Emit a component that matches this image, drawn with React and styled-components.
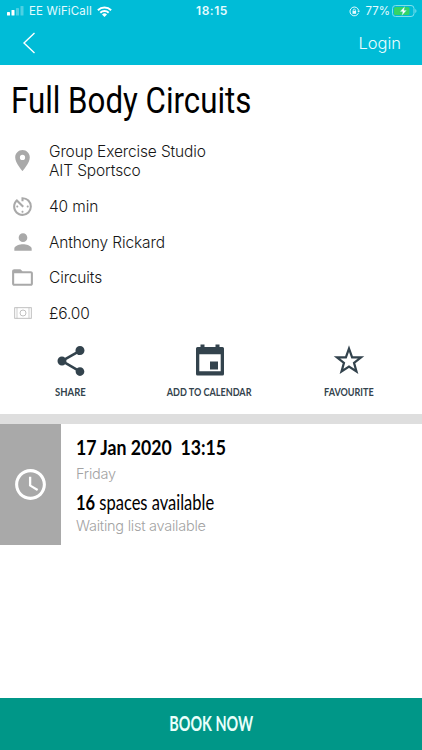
import React from 'react';
import styled, { createGlobalStyle } from 'styled-components';
import { MdPlace, MdAvTimer, MdPerson, MdFolderOpen, MdAccessTime } from 'react-icons/md';
import { IoMdShare } from 'react-icons/io';

const GlobalStyle = createGlobalStyle`
    *{
        box-sizing:border-box;
    }
    body{
        margin:0;
        background:white;
        font-family:"Liberation Sans", Arial, sans-serif;
    }
`

const Screen = styled.div`
    display:flex;
    flex-direction:column;
    height:750px;
    width:422px;
    overflow:hidden;
    background:white;
`

const Header = styled.header`
    height:65px;
    flex:none;
    background:#00bcd7;
    color:white;
`

const StatusBar = styled.div`
    display:grid;
    grid-template-columns:1fr auto 1fr;
    align-items:center;
    height:22px;
    padding:0 5px 0 7px;
    font-family:Inter, sans-serif;
    font-size:11.5px;
    line-height:22px;
    color:#e4fbff;
`

const StatusGroup = styled.div`
    display:flex;
    align-items:center;
    justify-content:${({ end }) => end ? 'flex-end' : 'flex-start'};
    svg{
        display:block;
        flex:none;
    }
`

const Carrier = styled.span`
    margin:0 5px 0 5px;
    letter-spacing:0.15px;
`

const Clock = styled.span`
    font-weight:600;
    font-size:12px;
    letter-spacing:0.55px;
`

const Percent = styled.span`
    margin:0 2px 0 5px;
`

const NavBar = styled.nav`
    display:flex;
    align-items:center;
    justify-content:space-between;
    height:42px;
    padding:0 21px 0 22px;
`

const NavButton = styled.button`
    display:flex;
    padding:0;
    border-width:0;
    background:transparent;
    color:#e9fcff;
    font-family:Inter, sans-serif;
    font-weight:300;
    font-size:16.5px;
    line-height:20px;
`

const Squeezed = styled.span`
    display:inline-block;
    white-space:pre;
    transform:scaleX(${({ scale }) => scale || 1});
    transform-origin:${({ origin }) => origin || 'left'} center;
`

const Title = styled.h1`
    margin:14px 0 0 11px;
    height:44px;
    font-family:Roboto, sans-serif;
    font-weight:400;
    font-size:36px;
    line-height:44px;
    color:black;
`

const InfoList = styled.div`
    display:flex;
    flex-direction:column;
    padding-top:15px;
`

const InfoRow = styled.div`
    display:grid;
    grid-template-columns:45px 1fr;
    align-items:center;
    height:${({ tall }) => tall ? '46px' : '35.6px'};
    margin-bottom:${({ tall }) => tall ? '4.8px' : '0'};
`

const InfoIcon = styled.div`
    display:flex;
    justify-content:center;
    padding-bottom:1px;
    color:#a9a9a9;
`

const InfoText = styled.div`
    padding-left:4px;
    font-family:Inter, sans-serif;
    font-weight:300;
    font-size:15.5px;
    line-height:19px;
    letter-spacing:-0.13px;
    color:#161616;
`

const Actions = styled.div`
    display:grid;
    grid-template-columns:repeat(3, 139px);
    margin:10px 0 0 1px;
    height:73.2px;
    flex:none;
`

const Action = styled.button`
    display:flex;
    flex-direction:column;
    align-items:center;
    padding:2px 0 0;
    border-width:0;
    background:transparent;
    color:#33434d;
    font-family:Lato, sans-serif;
    font-weight:700;
    font-size:12px;
    line-height:16px;
    white-space:nowrap;
    svg{
        display:block;
        margin-bottom:5px;
    }
`

const Divider = styled.div`
    height:10px;
    flex:none;
    background:#dedede;
`

const Session = styled.section`
    display:flex;
    height:121px;
`

const SessionIcon = styled.div`
    display:flex;
    align-items:center;
    justify-content:center;
    width:61px;
    background:#a9a9a9;
    color:white;
`

const SessionBody = styled.div`
    padding:9px 0 0 15px;
`

const SessionLine = styled.div`
    height:${({ bold }) => bold ? '28px' : '25px'};
    font-family:Lato, sans-serif;
    font-size:21px;
    line-height:28px;
    font-weight:${({ bold }) => bold ? 700 : 400};
    color:black;
`

const SessionNote = styled.div`
    height:27px;
    font-family:Inter, sans-serif;
    font-weight:300;
    font-size:14.5px;
    line-height:25px;
    letter-spacing:-0.25px;
    color:#a3a3a3;
`

const BookButton = styled.button`
    height:52px;
    flex:none;
    margin-top:auto;
    padding:0 0 2px;
    border-width:0;
    background:#009788;
    color:#eafffb;
    font-family:Lato, sans-serif;
    font-weight:700;
    font-size:20px;
    line-height:48px;
`

const SignalIcon = () => (
    <svg width="17" height="10" viewBox="0 0 17 10" fill="#fff">
        <rect x="0" y="6" width="3" height="3.5" rx=".6" />
        <rect x="4.5" y="4" width="3" height="5.5" rx=".6" />
        <rect x="9" y="2" width="3" height="7.5" rx=".6" opacity=".3" />
        <rect x="13.5" y="0" width="3" height="9.5" rx=".6" opacity=".3" />
    </svg>
)

const WifiIcon = () => (
    <svg width="15" height="11" viewBox="0 0 15 11" fill="none" stroke="#fff" strokeWidth="2">
        <path d="M.9 4.2a9.4 9.4 0 0 1 13.2 0" />
        <path d="M3.3 6.8a6 6 0 0 1 8.4 0" />
        <path d="M7.5 11 5 8.5a3.6 3.6 0 0 1 5 0z" fill="#fff" stroke="none" />
    </svg>
)

const RotationLockIcon = () => (
    <svg width="11" height="11" viewBox="0 0 11 11" fill="none" stroke="#e4fbff">
        <path d="M9.4 7.2A4.4 4.4 0 1 1 9.7 4.6" />
        <path d="M8.1 4.7h3L9.8 6.6z" fill="#e4fbff" stroke="none" />
        <rect x="3.5" y="4.9" width="3.6" height="2.9" fill="#e4fbff" stroke="none" />
        <path d="M4.2 5V4.2a1.1 1.1 0 0 1 2.2 0V5" strokeWidth=".8" />
    </svg>
)

const BatteryIcon = () => (
    <svg width="25" height="12" viewBox="0 0 25 12">
        <rect x=".5" y=".5" width="21.5" height="11" rx="3" fill="none" stroke="#7fe0ee" />
        <rect x="2" y="2" width="15.5" height="8" rx="1.6" fill="#35d466" />
        <path d="M23.3 4v4c1.5-.5 1.5-3.5 0-4z" fill="#7fe0ee" />
        <path d="M13 1 7.8 6.8h2.8L9.6 11l5.2-5.8H12z" fill="#fff" stroke="#18c9a0" strokeWidth=".4" />
    </svg>
)

const BackIcon = () => (
    <svg width="14" height="22" viewBox="0 0 14 22" fill="none" stroke="#fff" strokeWidth="1.4">
        <path d="M12.5 1 2 11l10.5 10" />
    </svg>
)

const MoneyIcon = () => (
    <svg width="18" height="12" viewBox="0 0 18 12" fill="none" stroke="#b9b9b9" strokeWidth=".9">
        <rect x=".7" y=".7" width="16.6" height="10.6" />
        <path d="M3 .7v10.6M15 .7v10.6" strokeWidth=".7" />
        <circle cx="9" cy="6" r="3" />
    </svg>
)

const CalendarIcon = () => (
    <svg width="36" height="36" viewBox="0 0 36 36" fill="currentColor">
        <path d="M8.5 1.5h4v3.2h-4zM23.5 1.5h4v3.2h-4z" />
        <path fillRule="evenodd" d="M5.5 4h25A1.5 1.5 0 0 1 32 5.5V31a1.5 1.5 0 0 1-1.5 1.5h-25A1.5 1.5 0 0 1 4 31V5.5A1.5 1.5 0 0 1 5.5 4zM7.3 11.3v16.9h21.4V11.3z" />
        <path d="M18 18.5h8v8h-8z" />
    </svg>
)

const StarIcon = () => (
    <svg width="36" height="36" viewBox="1 1 34 34" fill="none" stroke="currentColor" strokeWidth="2.1">
        <path d="M18 6.2 20.94 14.5H29.4L22.76 19.75 25.05 27.9 18 23.2 10.95 27.9 13.24 19.75 6.6 14.5H15.06z" />
    </svg>
)

const details = [
    { icon: <MdPlace size={25} />, lines: ['Group Exercise Studio', 'AIT Sportsco'] },
    { icon: <MdAvTimer size={25} />, lines: ['40 min'] },
    { icon: <MdPerson size={26} />, lines: ['Anthony Rickard'] },
    { icon: <MdFolderOpen size={25} />, lines: ['Circuits'] },
    { icon: <MoneyIcon />, lines: ['£6.00'] },
]

const actions = [
    { icon: <IoMdShare size={36} />, label: 'SHARE', scale: 0.79 },
    { icon: <CalendarIcon />, label: 'ADD TO CALENDAR', scale: 0.755 },
    { icon: <StarIcon />, label: 'FAVOURITE', scale: 0.755 },
]

export default function App() {

    return (
        <Screen>
            <GlobalStyle />
            <Header>
                <StatusBar>
                    <StatusGroup>
                        <SignalIcon />
                        <Carrier>EE WiFiCall</Carrier>
                        <WifiIcon />
                    </StatusGroup>
                    <Clock>18:15</Clock>
                    <StatusGroup end="true">
                        <RotationLockIcon />
                        <Percent>77%</Percent>
                        <BatteryIcon />
                    </StatusGroup>
                </StatusBar>
                <NavBar>
                    <NavButton aria-label="Back"><BackIcon /></NavButton>
                    <NavButton>Login</NavButton>
                </NavBar>
            </Header>
            <Title><Squeezed scale={0.868}>Full Body Circuits</Squeezed></Title>
            <InfoList>
                {details.map(({ icon, lines }) => (
                    <InfoRow key={lines[0]} tall={lines.length > 1 ? 1 : undefined}>
                        <InfoIcon>{icon}</InfoIcon>
                        <InfoText>
                            {lines.map(line => <div key={line}>{line}</div>)}
                        </InfoText>
                    </InfoRow>
                ))}
            </InfoList>
            <Actions>
                {actions.map(({ icon, label, scale }) => (
                    <Action key={label}>
                        {icon}
                        <Squeezed scale={scale} origin="center">{label}</Squeezed>
                    </Action>
                ))}
            </Actions>
            <Divider />
            <Session>
                <SessionIcon><MdAccessTime size={37} /></SessionIcon>
                <SessionBody>
                    <SessionLine bold="true"><Squeezed scale={0.842}>17 Jan 2020  13:15</Squeezed></SessionLine>
                    <SessionNote>Friday</SessionNote>
                    <SessionLine><Squeezed scale={0.785}><b>16</b> spaces available</Squeezed></SessionLine>
                    <SessionNote>Waiting list available</SessionNote>
                </SessionBody>
            </Session>
            <BookButton><Squeezed scale={0.72} origin="center">BOOK NOW</Squeezed></BookButton>
        </Screen>
    )
}
